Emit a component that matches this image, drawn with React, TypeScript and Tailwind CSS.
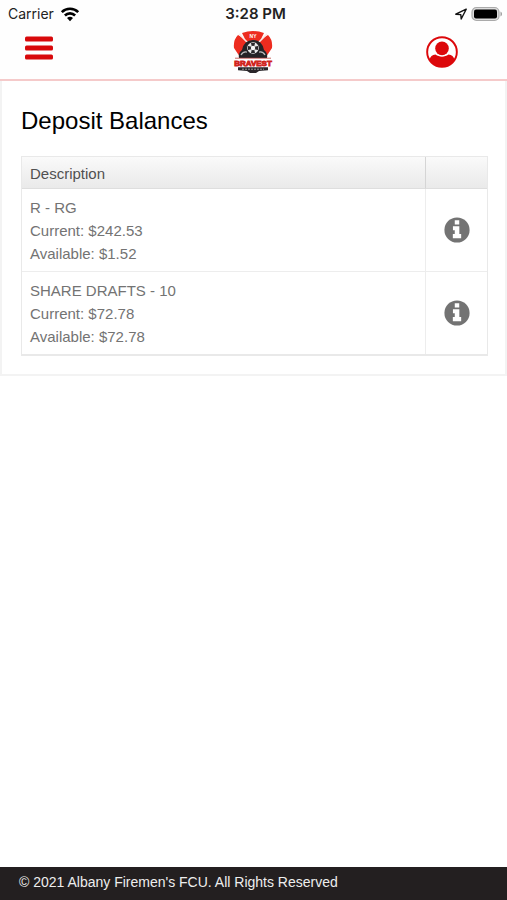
import React from "react";

type Account = { name: string; current: string; available: string };

const accounts: Account[] = [
  { name: "R - RG", current: "$242.53", available: "$1.52" },
  { name: "SHARE DRAFTS - 10", current: "$72.78", available: "$72.78" },
];

function WifiIcon() {
  return (
    <svg className="h-4 w-5" viewBox="0 0 20 16" fill="none" stroke="#000" strokeWidth="2.6" aria-hidden="true">
      <path d="M1.8 6.1a11.6 11.6 0 0 1 16.4 0" />
      <path d="M4.9 9.5a7.2 7.2 0 0 1 10.2 0" />
      <path d="M10 15.2 7 12.1a4.3 4.3 0 0 1 6 0z" fill="#000" stroke="none" />
    </svg>
  );
}

function LocationIcon() {
  return (
    <svg className="h-3 w-3" viewBox="0 0 12 12" fill="none" stroke="#111" strokeWidth="1.4" strokeLinejoin="round" aria-hidden="true">
      <path d="M11.2 1.2.8 6.2l5 .4.4 4.4z" />
    </svg>
  );
}

function BatteryIcon() {
  return (
    <svg className="h-4 w-8" viewBox="0 0 32 16" aria-hidden="true">
      <rect x="1" y="1.5" width="27" height="13" rx="4.5" fill="#ddd" stroke="#aaa" strokeWidth="1.2" />
      <rect x="3" y="3.5" width="23" height="9" rx="2" fill="#000" />
      <path d="M29.5 5.5c2 1 2 4 0 5z" fill="#999" />
    </svg>
  );
}

function MenuIcon() {
  return (
    <svg className="h-6 w-7" viewBox="0 0 28 24" fill="#d8090b" aria-hidden="true">
      <rect x="0" y="0.6" width="28" height="5" rx="1.6" />
      <rect x="0" y="9.6" width="28" height="5" rx="1.6" />
      <rect x="0" y="18.6" width="28" height="5" rx="1.6" />
    </svg>
  );
}

function ProfileIcon() {
  return (
    <svg className="size-8" viewBox="0 0 33 33" aria-hidden="true">
      <circle cx="16.5" cy="16.5" r="15.3" fill="#fff" stroke="#dc080b" strokeWidth="2" />
      <circle cx="16.5" cy="12.8" r="7" fill="#dc080b" />
      <path d="M3.6 25c.6-3.6 2.9-5.6 6.2-5.8 4 2.8 9.400 2.8 13.400 0 3.300.2 5.600 2.200 6.200 5.800a15.300 15.300 0 0 1-25.800 0z" fill="#dc080b" />
    </svg>
  );
}

function BravestLogo() {
  return (
    <svg className="h-11 w-10" viewBox="0 0 40 44" role="img" aria-label="NY Bravest">
      <path d="M9 3Q20-1 31 3l-3 6 7-4q5 5 4 13l-6 9H7l-6-9Q0 10 5 5l7 4z" fill="#ed2c1f" />
      <path d="M6 4 18 16M34 4 22 16" fill="none" stroke="#fbe9e6" strokeWidth="1.6" />
      <path d="M6 28q-1-5 3-8 2-10 11-10t11 10q4 3 3 8z" fill="#252326" />
      <path d="M8 25q2-4 6-3M32 25q-2-4-6-3" fill="none" stroke="#bbb" strokeWidth="1.3" />
      <circle cx="20" cy="18" r="6.5" fill="#e8e8e8" stroke="#252326" strokeWidth="1.4" />
      <path d="M18 13h4l-.8 3.800L25 16v4l-3.800-.8L22 23h-4l.8-3.800L15 20v-4l3.800.8z" fill="#29272a" />
      <circle cx="20" cy="18" r="2.2" fill="#f7f7f7" />
      <text x="20" y="7.5" textAnchor="middle" fontSize="5" fontWeight="700" fontFamily="Liberation Sans, sans-serif" fill="#fff">NY</text>
      <path d="M0 28h40v9H0z" fill="#fff" />
      <path d="M2 28.200h36" stroke="#b9423d" strokeWidth=".8" />
      <text x="20" y="36" textAnchor="middle" fontSize="8" fontWeight="700" fontFamily="Liberation Sans, sans-serif" fill="#dd2720" stroke="#d0241e" strokeWidth=".9">BRAVEST</text>
      <path d="M5 37.300h30v3l-9 .7-3 2h-6l-3-2-9-.7z" fill="#29262a" />
      <path d="M9 39.200h22" stroke="#ccc" strokeWidth=".7" strokeDasharray="2 1" />
    </svg>
  );
}

function InfoIcon() {
  return (
    <svg className="size-[26px]" viewBox="0 0 512 512" aria-hidden="true">
      <circle cx="256" cy="256" r="248" fill="#737373" />
      <path d="M212 62h88v84h-88zM176 180h126v156h36v84H174v-84h38v-76h-36z" fill="#fff" />
    </svg>
  );
}

export default function App() {
  return (
    <div className="flex min-h-screen flex-col bg-white font-['Liberation_Sans',Arial,sans-serif]">
      <header className="border-b-2 border-[#f5caca] bg-[#fefefe]">
        <div className="grid h-7 grid-cols-3 items-center pr-1 pl-2 font-['Inter','Liberation_Sans',sans-serif] text-sm text-[#222]">
          <div className="flex items-center gap-1.5">
            <span>Carrier</span>
            <WifiIcon />
          </div>
          <time className="text-center text-[15px] font-semibold">3:28 PM</time>
          <div className="flex items-center justify-end gap-1">
            <LocationIcon />
            <BatteryIcon />
          </div>
        </div>
        <div className="grid h-[51px] grid-cols-3 items-start px-[25px]">
          <button type="button" aria-label="Menu" className="mt-2 justify-self-start">
            <MenuIcon />
          </button>
          <div className="mt-0.5 justify-self-center">
            <BravestLogo />
          </div>
          <button type="button" aria-label="Profile" className="mt-2 mr-6 justify-self-end">
            <ProfileIcon />
          </button>
        </div>
      </header>

      <main className="border-x-2 border-b-2 border-[#f3f3f3] pt-6 pr-[17px] pb-[18px] pl-[19px]">
        <h1 className="text-2xl leading-8 text-black">Deposit Balances</h1>
        <table className="mt-[19px] w-full table-fixed border-separate border-spacing-0 border border-b-2 border-[#e9e9e9] text-[15px] text-[#737373]">
          <colgroup>
            <col />
            <col className="w-[62px]" />
          </colgroup>
          <thead>
            <tr className="h-8 bg-linear-to-b from-[#fafafa] to-[#e9e9e9]">
              <th scope="col" className="border-b border-[#dedede] px-2 pt-1 text-left font-normal text-[#505050]">
                Description
              </th>
              <th scope="col" aria-label="Details" className="border-b border-l border-b-[#dedede] border-l-[#d5d5d5]" />
            </tr>
          </thead>
          <tbody>
            {accounts.map((account) => (
              <tr key={account.name} className="group">
                <td className="border-b border-[#ededed] px-2 pt-[7px] pb-[6px] leading-[23px] group-last:border-b-0">
                  <div>{account.name}</div>
                  <div>Current: {account.current}</div>
                  <div>Available: {account.available}</div>
                </td>
                <td className="border-b border-l border-[#ededed] text-center align-middle group-last:border-b-0">
                  <button type="button" aria-label={`Details for ${account.name}`} className="align-middle">
                    <InfoIcon />
                  </button>
                </td>
              </tr>
            ))}
          </tbody>
        </table>
      </main>

      <footer className="mt-auto bg-[#231f20] px-[19px] pt-[5px] pb-[7px] text-sm leading-[21px] text-[#eee]">
        © 2021 Albany Firemen's FCU. All Rights Reserved
      </footer>
    </div>
  );
}
